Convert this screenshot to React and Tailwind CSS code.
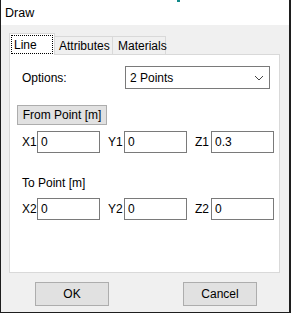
import React from "react";

const font = { fontFamily: '"Liberation Sans", Arial, sans-serif' };

function Field({ label, value, labelW }) {
  return (
    <div className="flex items-center">
      <span className={`${labelW} text-[12px] leading-none`}>{label}</span>
      <div className="w-[63px] h-[22px] border border-[#7a7a7a] bg-white flex items-center pl-[3px] text-[12px]">
        {value}
      </div>
    </div>
  );
}

export default function App() {
  return (
    <div
      className="relative w-[291px] h-[313px] bg-[#f0f0f0] border-l border-r-2 border-b border-[#1e1e1e] flex flex-col text-black"
      style={font}
    >
      <div className="absolute left-[176px] top-0 w-[3px] h-[2px] bg-[#128a8a]" />
      <div className="h-[25px] bg-white flex items-center pl-[4px] text-[12.5px] pt-[2px]">Draw</div>

      <div className="pl-[8px] pt-[8px] flex flex-col">
        <div className="flex items-end h-[21px] text-[12px]">
          <div className="relative z-10 -mb-px w-[46px] h-[22px] bg-white border border-b-0 border-[#d9d9d9] flex items-center pl-[4px] pt-px">
            <span className="absolute left-px top-[1px] right-[1px] bottom-[1px] border border-dotted border-black" />
            Line
          </div>
          <div className="w-[58px] h-[18px] border border-l-0 border-b-0 border-[#d9d9d9] flex items-center pl-[4px]">
            Attributes
          </div>
          <div className="w-[53px] h-[18px] border border-l-0 border-b-0 border-[#d9d9d9] flex items-center pl-[5px]">
            Materials
          </div>
        </div>

        <div className="w-[271px] h-[219px] bg-white border border-[#d9d9d9] flex flex-col pt-[11px]">
          <div className="flex items-center">
            <span className="w-[115px] pl-[12px] text-[12px]">Options:</span>
            <div className="w-[145px] h-[23px] border border-[#7a7a7a] flex items-center justify-between pl-[4px] pr-[4px] text-[12px]">
              <span>2 Points</span>
              <svg width="10" height="6" viewBox="0 0 10 6" className="mr-[1px]">
                <polyline points="1,1 5,5 9,1" fill="none" stroke="#444" strokeWidth="1" />
              </svg>
            </div>
          </div>

          <div className="pl-[7px] mt-[16px]">
            <div className="w-[90px] h-[20px] bg-[#e1e1e1] border border-[#adadad] flex items-center justify-center text-[12px]">
              From Point [m]
            </div>
          </div>

          <div className="flex items-center pl-[12px] mt-[6px] gap-[8px]">
            <Field label="X1" value="0" labelW="w-[15px]" />
            <Field label="Y1" value="0" labelW="w-[16px]" />
            <Field label="Z1" value="0.3" labelW="w-[16px]" />
          </div>

          <div className="pl-[12px] mt-[23px] text-[12px] leading-[14px]">To Point [m]</div>

          <div className="flex items-center pl-[12px] mt-[8px] gap-[8px]">
            <Field label="X2" value="0" labelW="w-[15px]" />
            <Field label="Y2" value="0" labelW="w-[16px]" />
            <Field label="Z2" value="0" labelW="w-[16px]" />
          </div>
        </div>

        <div className="flex mt-[9px] pl-[26px] gap-[74px] text-[12px]">
          <div className="w-[74px] h-[24px] bg-[#e1e1e1] border border-[#adadad] flex items-center justify-center">OK</div>
          <div className="w-[74px] h-[24px] bg-[#e1e1e1] border border-[#adadad] flex items-center justify-center">Cancel</div>
        </div>
      </div>
    </div>
  );
}
